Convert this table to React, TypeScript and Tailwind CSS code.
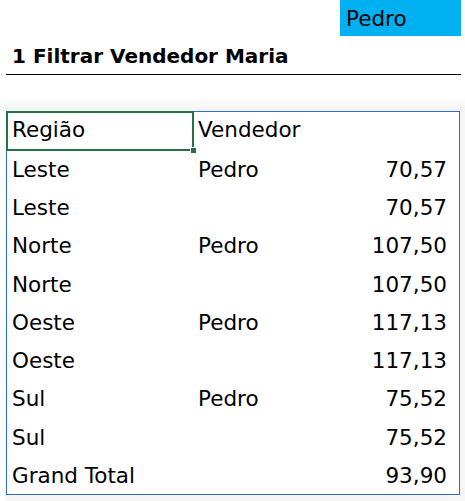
import React from "react";

const rows: [string, string, string][] = [
  ["Leste", "Pedro", "70,57"],
  ["Leste", "", "70,57"],
  ["Norte", "Pedro", "107,50"],
  ["Norte", "", "107,50"],
  ["Oeste", "Pedro", "117,13"],
  ["Oeste", "", "117,13"],
  ["Sul", "Pedro", "75,52"],
  ["Sul", "", "75,52"],
  ["Grand Total", "", "93,90"],
];

export default function App() {
  return (
    <div
      className="w-[465px] h-[501px] bg-white text-black overflow-hidden"
      style={{ fontFamily: '"DejaVu Sans", "Liberation Sans", sans-serif' }}
    >
      <div className="flex h-[36px]">
        <div className="w-[340px]" />
        <div className="w-[121px] bg-[#00b0f0] flex items-center pl-[6px] pt-[1px] text-[21.5px] leading-none">
          Pedro
        </div>
      </div>
      <div className="ml-[6px] w-[455px] h-[39px] border-b border-black flex items-end pb-[8px] pl-[6px] text-[20px] font-bold leading-none">
        1 Filtrar Vendedor Maria
      </div>
      <div className="h-[22px]" />
      <div className="h-[14px] bg-gradient-to-b from-white to-[#f3f3f3]" />
      <div className="bg-[linear-gradient(to_right,#ffffff_0px,#ffffff_4px,#f6f6f6_6px,#f6f6f6_100%)] pl-[6px] pr-[5px] pb-[10px]">
        <div className="border border-[#2f6ad0] bg-white relative text-[21.5px] leading-none">
          <div className="flex h-[38px] items-center pb-[2px]">
            <div className="w-[186px] pl-[5px]">Região</div>
            <div className="w-[150px] pl-[5px]">Vendedor</div>
            <div className="flex-1" />
          </div>
          {rows.map((r, i) => (
            <div key={i} className="flex h-[38.25px] items-center pt-[1px]">
              <div className="w-[186px] pl-[5px]">{r[0]}</div>
              <div className="w-[150px] pl-[5px]">{r[1]}</div>
              <div className="flex-1 text-right pr-[12px]">{r[2]}</div>
            </div>
          ))}
          <div className="absolute left-[-1px] top-[-1px] w-[188px] h-[40px] border-2 border-[#217346]" />
          <div className="absolute left-[183px] top-[35px] w-[5px] h-[5px] bg-[#217346] border border-white box-content" />
        </div>
      </div>
    </div>
  );
}
